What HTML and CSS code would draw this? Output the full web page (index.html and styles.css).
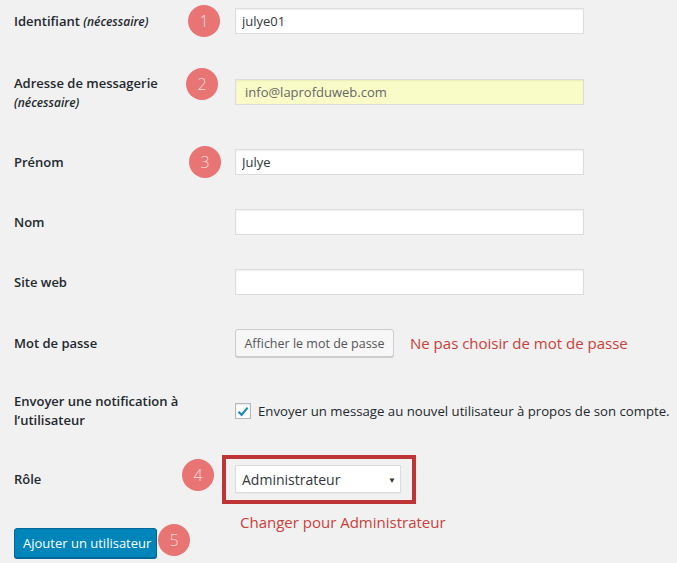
FILE: index.html
```html
<!DOCTYPE html>
<html lang="fr">
<head>
<meta charset="utf-8">
<title>Ajouter un utilisateur</title>
<link rel="stylesheet" href="styles.css">
</head>
<body>
<form class="form">
  <div class="row gap-1">
    <label class="label">Identifiant <span class="desc">(nécessaire)</span></label>
    <div class="field">
      <span class="badge b1">1</span>
      <input class="input" type="text" value="julye01">
    </div>
  </div>
  <div class="row gap-30">
    <label class="label two-line">Adresse de messagerie<br><span class="desc">(nécessaire)</span></label>
    <div class="field">
      <span class="badge b2">2</span>
      <input class="input autofill" type="text" value="info@laprofduweb.com">
    </div>
  </div>
  <div class="row gap-30">
    <label class="label">Prénom</label>
    <div class="field">
      <span class="badge b3">3</span>
      <input class="input" type="text" value="Julye">
    </div>
  </div>
  <div class="row gap-20">
    <label class="label">Nom</label>
    <div class="field"><input class="input" type="text" value=""></div>
  </div>
  <div class="row gap-20">
    <label class="label">Site web</label>
    <div class="field"><input class="input" type="text" value=""></div>
  </div>
  <div class="row gap-21">
    <label class="label">Mot de passe</label>
    <div class="field inline">
      <button type="button" class="btn-secondary">Afficher le mot de passe</button>
      <span class="note">Ne pas choisir de mot de passe</span>
    </div>
  </div>
  <div class="row gap-28">
    <label class="label">Envoyer une notification à<br>l’utilisateur</label>
    <div class="field inline">
      <span class="checkbox"><svg width="12" height="11" viewBox="0 0 12 11"><path d="M1.5 5.8 L4.6 8.8 L10.6 1.6" fill="none" stroke="#1e8cbe" stroke-width="2.2" stroke-linejoin="miter"/></svg></span>
      <span class="check-text">Envoyer un message au nouvel utilisateur à propos de son compte.</span>
    </div>
  </div>
  <div class="row gap-24 role-row">
    <label class="label">Rôle</label>
    <div class="field">
      <span class="badge b4">4</span>
      <div class="highlight">
        <div class="select">Administrateur<span class="arrow">▼</span></div>
      </div>
    </div>
  </div>
  <div class="submit-row">
    <div class="submit-cell">
      <button type="button" class="btn-primary">Ajouter un utilisateur</button>
      <span class="badge b5">5</span>
    </div>
    <div class="note change">Changer pour Administrateur</div>
  </div>
</form>
</body>
</html>
```
FILE: styles.css
```css
html, body {
  margin: 0;
  padding: 0;
  background: #f1f1f1;
}
body {
  font-family: "Open Sans", "Noto Sans", "Liberation Sans", sans-serif;
  font-size: 13px;
  color: #23282d;
  width: 677px;
  height: 563px;
  overflow: hidden;
}
.form {
  padding-left: 14px;
}
.row {
  display: grid;
  grid-template-columns: 221px 1fr;
  align-items: center;
  min-height: 40px;
}
.gap-1 { margin-top: 1px; }
.gap-20 { margin-top: 20px; }
.gap-21 { margin-top: 21px; }
.gap-24 { margin-top: 24px; }
.gap-28 { margin-top: 28px; }
.gap-30 { margin-top: 30px; }
.label {
  font-weight: 600;
  line-height: 19px;
}
.label.two-line {
  padding-top: 3px;
}
.desc {
  font-style: italic;
  font-weight: 600;
  font-size: 12px;
}
.field {
  position: relative;
  display: flex;
  align-items: center;
}
.field.inline {
  gap: 16px;
}
.input {
  box-sizing: border-box;
  width: 349px;
  height: 26px;
  margin: 0;
  padding: 2px 6px;
  border: 1px solid #ddd;
  box-shadow: inset 0 1px 2px rgba(0,0,0,0.07);
  background: #fff;
  font-family: inherit;
  font-size: 13px;
  color: #32373c;
  outline: none;
}
.input.autofill {
  background: #fafcc8;
  color: #666;
  padding-left: 9px;
}
.badge {
  position: absolute;
  width: 32px;
  height: 32px;
  border-radius: 50%;
  background: #e87474;
  color: #fbdcdc;
  font-size: 16px;
  font-weight: 300;
  display: flex;
  align-items: center;
  justify-content: center;
  line-height: 1;
}
.b1 { left: -47px; top: -3px; }
.b2 { left: -49px; top: -11px; }
.b3 { left: -46px; top: -3px; }
.b4 { left: -40px; top: 4px; }
.b5 { left: 144px; top: -4px; }
.btn-secondary {
  box-sizing: border-box;
  height: 28px;
  width: 159px;
  padding: 0;
  margin: 0;
  border: 1px solid #ccc;
  border-radius: 3px;
  background: #f7f7f7;
  box-shadow: 0 1px 0 #ccc;
  font-family: inherit;
  font-size: 12.5px;
  color: #555;
  white-space: nowrap;
}
.note {
  color: #c9403a;
  font-size: 15px;
  white-space: nowrap;
}
.checkbox {
  box-sizing: border-box;
  width: 16px;
  height: 16px;
  border: 1px solid #b4b9be;
  background: #fff;
  box-shadow: inset 0 1px 2px rgba(0,0,0,0.1);
  display: flex;
  align-items: center;
  justify-content: center;
  flex: none;
}
.field.inline .check-text {
  margin-left: -9px;
  white-space: nowrap;
  font-size: 13.2px;
}
.role-row .field {
  margin-left: -13px;
}
.highlight {
  border: 4px solid #bd3535;
  padding: 6px 11px 7px 9px;
}
.select {
  box-sizing: border-box;
  width: 166px;
  height: 28px;
  border: 1px solid #ddd;
  background: #fff;
  box-shadow: 0 1px 1px rgba(0,0,0,0.04);
  display: flex;
  align-items: center;
  justify-content: space-between;
  padding: 0 4px 0 6px;
  font-size: 14px;
  color: #32373c;
}
.arrow {
  font-size: 8px;
  color: #333;
}
.submit-row {
  display: grid;
  grid-template-columns: 226px 1fr;
}
.submit-cell {
  position: relative;
  margin-top: 24px;
}
.change {
  margin-top: 8px;
}
.btn-primary {
  box-sizing: border-box;
  height: 30px;
  width: 143px;
  padding: 0 8px;
  margin: 0;
  border: 1px solid #006799;
  border-radius: 3px;
  background: #0085ba;
  box-shadow: 0 1px 0 #006799;
  font-family: inherit;
  font-size: 13px;
  color: #fff;
  white-space: nowrap;
}
```
